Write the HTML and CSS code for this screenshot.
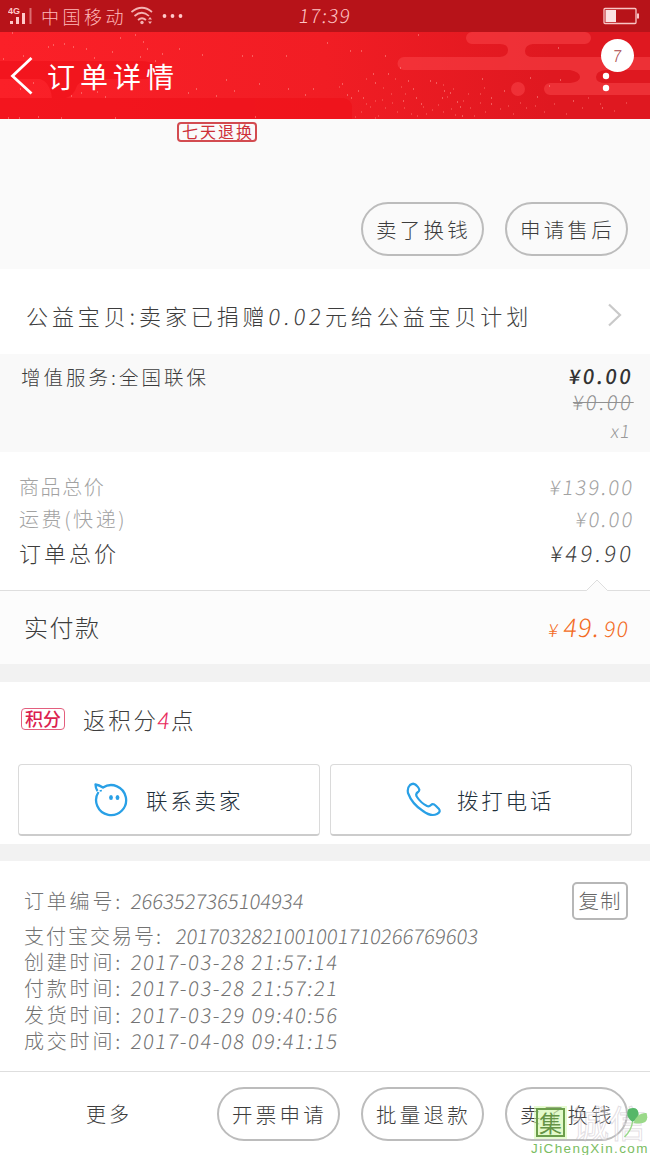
FILE: index.html
```
<!DOCTYPE html>
<html lang="zh-CN">
<head>
<meta charset="utf-8">
<title>订单详情</title>
<link rel="stylesheet" href="styles.css">
</head>
<body>
<div class="screen">
  <div class="status">
    <svg class="signal" width="26" height="20" viewBox="0 0 26 20"><g fill="#ffc9c9"><rect x="2" y="15" width="3" height="3"/><rect x="8" y="11" width="3" height="7"/><rect x="14" y="7" width="3" height="11"/><rect x="21.500" y="2" width="2" height="16" opacity=".5"/></g><text x="0" y="8" class="net">4G</text></svg>
    <span class="carrier">中国移动</span>
    <svg class="wifi" width="22" height="20" viewBox="0 0 22 20"><g fill="none" stroke="#f4b2b2" stroke-width="1.700"><path d="M.5 6Q11-2.500 21 6M3.500 10Q11 3.500 18 10M7 14Q11 10.500 15 14"/></g><circle cx="11" cy="16.500" r="1.700" fill="#f4b2b2"/><path d="M19 11l2 2.500h-4zM19 18l2-2.500h-4z" fill="#f4b2b2"/></svg>
    <svg class="more" width="22" height="6" viewBox="0 0 22 6"><g fill="#ffc9c9"><circle cx="2.500" cy="3" r="1.900"/><circle cx="10.500" cy="3" r="1.900"/><circle cx="18.500" cy="3" r="1.900"/></g></svg>
    <span class="num clock">17:39</span>
    <svg class="battery" width="37" height="18" viewBox="0 0 37 18"><rect x="1" y="1.500" width="32" height="15" rx="1" fill="none" stroke="#f9c5c5" stroke-width="1.300"/><rect x="2.500" y="3" width="10.500" height="12" fill="#fbe3e3"/><rect x="34" y="6.500" width="2" height="5" fill="#f9c5c5"/></svg>
  </div>
  <div class="header">
    <svg class="deco" width="650" height="87" viewBox="0 0 650 87">
      <g fill="#ef0f18" opacity=".6"><path d="M0 29H140Q160 30 160 38T145 47H90Q78 49 76 56T66 66H52Q50 50 40 47H0z"/><rect x="-10" y="66" width="362" height="30" rx="9"/></g>
      <g fill="#fa4449" opacity=".55"><path d="M472 0H585A6 6 0 0 1 585 12H533Q525 13 525 19T533 25H650V38H606Q596 39 596 45T606 51H650V63H550A6 6 0 0 1 550 51H570Q580 50 580 45T570 38H404A6 6 0 0 1 404 25H500Q508 24 508 18T500 12H472A6 6 0 0 1 472 0z"/><circle cx="518" cy="57" r="7"/></g>
      <path class="dust" d="M3 27h1M12 1h1M23 24h1M33 51h1M48 15h1M53 13h1M64 12h1M73 15h1M86 17h1M94 26h1M112 20h1M120 6h1M135 3h1M143 10h1M147 17h1M162 22h1M140 25h1M155 29h1M170 35h1M179 17h1M202 23h1M242 24h1M252 24h1M286 24h1M196 57h1M226 48h1M234 59h1M259 52h1M288 57h1M313 57h1M305 63h1M216 64h1M188 61h1M105 65h1M97 60h1M81 61h1M71 64h1M20 57h1M8 86h1M19 86h1M38 85h1M61 86h1M115 86h1M255 85h1M327 11h1M350 19h1M361 19h1M342 52h1M347 63h1M351 66h1M358 59h1M363 66h1M373 42h1M375 51h1M385 24h1M388 42h1M400 36h1M403 69h1M408 49h1M413 57h1M416 66h1M421 72h1M430 49h1M436 51h1M442 66h1M444 59h1M450 61h1M457 70h1M460 75h1M482 47h1M491 72h1M504 59h1M530 46h1M537 65h1M549 54h1M560 48h1M573 69h1M602 76h1M418 3h1M558 16h1M491 66h1M462 84h1"/>
      <path class="dust small" d="M366 72h1M370 75h1M375 69h1M382 68h1M385 76h1M392 71h1M397 80h1M404 76h1M411 82h1M417 84h1M423 75h1M426 82h1M432 78h1M438 73h1M443 80h1M447 65h1M451 77h1M455 83h1M463 69h1M470 76h1M474 84h1M480 71h1M485 80h1M500 77h1M508 74h1M513 82h1M520 71h1M526 76h1M535 74h1M544 80h1M554 72h1M566 82h1M582 76h1M378 84h1M361 80h1M395 47h1M401 55h1M443 53h1M453 57h1M468 62h1M480 62h1M484 56h1M391 62h1M383 56h1M366 47h1M405 62h1M355 85h1M375 86h1M339 55h1M588 66h1M600 72h1M614 79h1M626 71h1"/>
    </svg>
    <svg class="back" width="24" height="40" viewBox="0 0 24 40"><path d="M21.500 2 2.500 20 21.500 37.500" fill="none" stroke="#fff" stroke-width="2.800"/></svg>
    <h1 class="title">订单详情</h1>
    <svg class="kebab" width="10" height="32" viewBox="0 0 10 32"><circle cx="5" cy="15" r="3.200" fill="#fff"/><circle cx="5" cy="27" r="3.200" fill="#fff"/></svg>
    <span class="badge"><span class="num">7</span></span>
  </div>
  <div class="goods">
    <span class="policy">七天退换</span>
    <div class="actions"><span class="pill">卖了换钱</span><span class="pill">申请售后</span></div>
  </div>
  <div class="charity"><span>公益宝贝:卖家已捐赠<span class="num">0.02</span>元给公益宝贝计划</span><svg width="16" height="24" viewBox="0 0 16 24"><path d="M2 1.500 13 12 2 22.500" fill="none" stroke="#c9c9c9" stroke-width="2.200"/></svg></div>
  <div class="service">
    <span class="service-name">增值服务:全国联保</span>
    <div class="service-price"><span class="num now">¥0.00</span><span class="num old">¥0.00</span><span class="num qty">x1</span></div>
  </div>
  <div class="totals">
    <div class="row"><span>商品总价</span><span class="num">¥139.00</span></div>
    <div class="row freight"><span>运费(快递)</span><span class="num">¥0.00</span></div>
    <div class="row strong"><span>订单总价</span><span class="num">¥49.90</span></div>
    <svg class="notch" width="24" height="13" viewBox="0 0 24 13"><path d="M1 12 12 1 23 12V13H1z" fill="#fcfcfc"/><path d="M0 11.500H1.500L12 1 22.500 11.500H24" fill="none" stroke="#dedede"/></svg>
  </div>
  <div class="paid"><span>实付款</span><span class="num paid-sum"><small>¥</small>49.<b>90</b></span></div>
  <div class="gap"></div>
  <div class="contact">
    <div class="points"><span class="tag">积分</span><span>返积分<em class="num">4</em>点</span></div>
    <div class="cards">
      <div class="card"><svg width="34" height="36" viewBox="0 0 34 36"><path d="M7 9.500 6.500 8M4.500 10A15 15 0 1 0 9 5.500Q5 3 1.500 2.500Q1.500 6 3.500 9" fill="none" stroke="#29a0e6" stroke-width="2.300" stroke-linejoin="round"/><ellipse cx="17" cy="15.500" rx="1.900" ry="2.500" fill="#29a0e6"/><ellipse cx="23.500" cy="15.500" rx="1.900" ry="2.500" fill="#29a0e6"/></svg><span>联系卖家</span></div>
      <div class="card call"><svg width="36" height="36" viewBox="0 0 36 36"><path d="M4 3Q8 0 11 4Q15 8 12 10Q9 12 11 15Q15 21 21 24Q23 25 25 23Q27 21 30 24L33 27Q35 30 31 32Q25 35 17 29Q6 22 2 11Q1 6 4 3z" fill="none" stroke="#29a0e6" stroke-width="2.200" stroke-linejoin="round"/></svg><span>拨打电话</span></div>
    </div>
  </div>
  <div class="gap thin"></div>
  <div class="details">
    <div class="line first"><span class="key">订单编号:</span><span class="num serial">2663527365104934</span><span class="copy">复制</span></div>
    <div class="line"><span class="key wide">支付宝交易号:</span><span class="num serial">2017032821001001710266769603</span></div>
    <div class="line"><span class="key">创建时间:</span><span class="num date">2017-03-28 21:57:14</span></div>
    <div class="line"><span class="key">付款时间:</span><span class="num date">2017-03-28 21:57:21</span></div>
    <div class="line"><span class="key">发货时间:</span><span class="num date">2017-03-29 09:40:56</span></div>
    <div class="line"><span class="key">成交时间:</span><span class="num date">2017-04-08 09:41:15</span></div>
  </div>
  <div class="footer"><span class="extra">更多</span><span class="pill">开票申请</span><span class="pill">批量退款</span><span class="pill">卖了换钱</span></div>
  <div class="watermark">
    <span class="seal">集</span><span class="ghost">诚信</span>
    <svg class="leaf" width="27" height="32" viewBox="0 0 24 32"><path d="M8 15Q0 9 4 2Q13-1 14 6Q15 11 8 15z" fill="#56b768"/><path d="M9 16Q13 5 22 6Q26 19 9 16z" fill="#9ad989"/><path d="M8 15Q7 23 0 30" fill="none" stroke="#9ad989" stroke-width="1.500"/></svg>
    <span class="site">JiChengXin.com</span>
  </div>
</div>
</body>
</html>
```
FILE: styles.css
```
* { box-sizing: border-box; }
body { margin: 0; background: #fff; }
.screen {
  position: relative; width: 650px; height: 1155px; overflow: hidden;
  font-family: "Noto Sans CJK SC", sans-serif; font-weight: 300; color: #3d3d3d; white-space: nowrap;
}
.num { display: inline-block; font-style: normal; transform: skewX(-8deg); }
.status { display: flex; align-items: center; height: 32px; padding: 0 10px 0 8px; background: #b71319; color: #ffb9b9; }
.net { font: 700 9px "Liberation Sans", sans-serif; fill: #ffc9c9; }
.carrier { margin-left: 7px; width: 90px; font-size: 18px; letter-spacing: 3.5px; line-height: 32px; }
.more { margin-left: 9px; }
.clock { margin-left: 115px; font-size: 19px; letter-spacing: 1.4px; line-height: 30px; height: 32px; color: #ffc4c4; }
.battery { margin-left: auto; }
.header {
  position: relative; display: flex; align-items: center; height: 87px; padding-left: 10px;
  background: linear-gradient(90deg, #fb2028 0%, #f11d24 50%, #df1820 85%, #df1820 100%);
}
.deco { position: absolute; left: 0; top: 0; }
.dust { stroke: #ff9a94; stroke-width: 1.1; fill: none; }
.small { stroke: #fb6a67; }
.back, .title { position: relative; }
.title { margin: 0 0 0 13px; font-size: 28px; font-weight: 400; letter-spacing: 5px; color: #fff; line-height: 40px; }
.kebab { position: absolute; left: 601px; top: 29px; }
.badge { position: absolute; left: 601px; top: 7px; width: 33px; height: 33px; border-radius: 50%; background: #fff; color: #a94347; font-size: 16px; line-height: 32px; text-align: center; }
.goods { display: flex; flex-direction: column; justify-content: space-between; height: 150px; padding: 3px 22px 13px 177px; background: #fafafa; }
.policy { width: 80px; height: 20px; border: 2px solid #d34b50; border-radius: 4px; color: #cd3038; font-size: 16px; font-weight: 400; letter-spacing: 2px; line-height: 14px; padding-left: 3px; }
.actions { display: flex; justify-content: flex-end; gap: 21px; }
.pill { width: 123px; height: 54px; border: 2px solid #bcbcbc; border-radius: 27px; font-size: 20.5px; letter-spacing: 3.3px; line-height: 50px; text-align: center; padding-left: 2px; }
.charity { display: flex; align-items: center; justify-content: space-between; height: 85px; padding: 6px 27px 0 26px; font-size: 22px; letter-spacing: 3.9px; }
.service { display: flex; justify-content: space-between; height: 98px; padding: 9px 16px 0 21px; background: #f9f9f9; }
.service-name { font-size: 19.5px; letter-spacing: 3px; line-height: 28px; }
.service-price { display: flex; flex-direction: column; align-items: flex-end; }
.now { font-size: 20px; font-weight: 500; letter-spacing: 2.6px; line-height: 26px; color: #333; }
.old { padding-left: 5px; font-size: 20px; letter-spacing: 2.6px; line-height: 25px; color: #909090; text-decoration: line-through; text-decoration-thickness: 1px; }
.qty { font-size: 18px; letter-spacing: 1px; line-height: 33px; color: #999; margin-right: 3px; }
.totals { position: relative; height: 139px; padding: 19px 16px 0 19px; border-bottom: 1px solid #dedede; color: #a2a2a2; }
.row { display: flex; justify-content: space-between; height: 31px; line-height: 31px; font-size: 20px; letter-spacing: 1.6px; }
.row .num { letter-spacing: 2.2px; margin-right: -1px; }
.freight { height: 33px; line-height: 33px; letter-spacing: 2.6px; }
.strong { height: 34px; line-height: 34px; font-size: 22px; letter-spacing: 3px; color: #3d3d3d; }
.strong .num { letter-spacing: 3.2px; }
.notch { position: absolute; left: 585px; bottom: -2px; }
.paid { display: flex; align-items: center; justify-content: space-between; height: 73px; padding: 0 20px 3px 24px; background: #fcfcfc; font-size: 24px; letter-spacing: 1.5px; }
.paid-sum { color: #f36b24; font-size: 25px; letter-spacing: 1.3px; }
.paid-sum small { font-size: 18px; margin-right: 4px; }
.paid-sum b { font-size: 21px; font-weight: 300; margin-left: 4px; }
.gap { height: 18px; background: #f2f2f2; }
.thin { height: 17px; }
.contact { display: flex; flex-direction: column; height: 162px; padding: 17px 18px 8px; justify-content: space-between; }
.points { display: flex; align-items: center; gap: 18px; height: 40px; padding-left: 3px; font-size: 22.5px; letter-spacing: 2.8px; }
.points em { color: #e82a5d; letter-spacing: 1px; margin-left: -1px; }
.tag { width: 44px; height: 22px; border: 1.5px solid #e35f7e; border-radius: 4px; color: #dc1f50; font-size: 18px; font-weight: 500; letter-spacing: 0; line-height: 18px; text-align: center; }
.cards { display: grid; grid-template-columns: 302px 302px; gap: 10px; }
.card { display: flex; align-items: center; gap: 18px; height: 72px; padding-left: 75px; border: 1px solid #dadada; border-bottom: 2px solid #ccc; border-radius: 4px; font-size: 21.5px; letter-spacing: 2.8px; color: #1f303b; }
.call { gap: 15px; }
.details { height: 210px; padding: 17px 22px 0 24px; color: #737373; font-size: 20px; }
.line { display: flex; align-items: center; height: 26.2px; line-height: 26px; }
.first { height: 45px; }
.key { width: 107px; letter-spacing: 2.8px; }
.wide { width: 152px; letter-spacing: 2px; }
.serial { letter-spacing: 0.1px; }
.date { letter-spacing: 1.6px; }
.copy { width: 56px; height: 38px; margin-left: auto; border: 2px solid #b7b7b7; border-radius: 5px; font-size: 20.5px; line-height: 33px; letter-spacing: 1px; text-align: center; color: #666; }
.footer { display: flex; align-items: center; gap: 21px; height: 84px; padding: 0 22px 0 86px; border-top: 1px solid #dedede; }
.extra { width: 110px; font-size: 20px; letter-spacing: 3px; }
.footer .pill { flex: none; }
.watermark { position: absolute; left: 530px; top: 1104px; width: 120px; height: 51px; }
.seal { position: absolute; left: 6px; top: 4px; width: 29px; height: 29px; border: 2px solid #6b9e4b; outline: 2px solid rgba(214, 248, 178, .6); background: rgba(215, 248, 180, .7); color: #659346; font-size: 23px; font-weight: 400; line-height: 24px; text-align: center; }
.ghost { position: absolute; left: 42px; top: -1px; font-size: 37px; font-weight: 400; line-height: 38px; color: rgba(255, 255, 255, .35); -webkit-text-stroke: 1px rgba(184, 174, 184, .4); }
.leaf { position: absolute; left: 93px; top: 3px; }
.site { position: absolute; left: 1px; top: 36px; font-family: "Liberation Sans", sans-serif; font-size: 13.5px; font-weight: 400; line-height: 17px; letter-spacing: 1.4px; color: #7bbd62; }
```
